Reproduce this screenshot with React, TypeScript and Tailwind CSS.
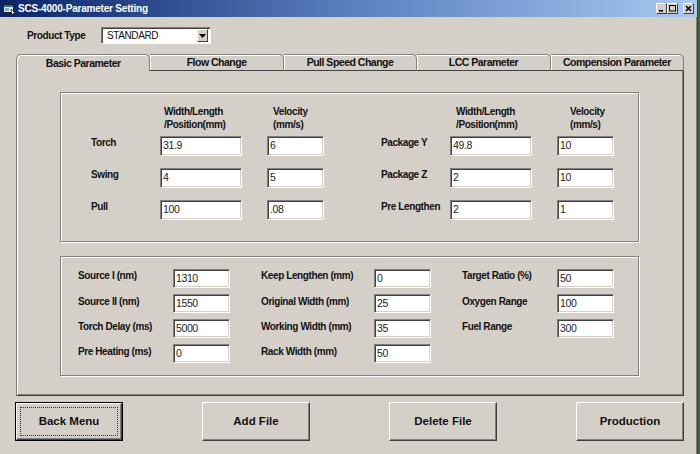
import React from "react";

const sans = "font-['Liberation_Sans',Arial,sans-serif]";

function Field({ value, tall }: { value: string; tall?: boolean }) {
  return (
    <div
      className={`${tall ? "h-[20px]" : "h-[19px]"} bg-white border border-t-[#808080] border-l-[#808080] border-b-white border-r-white shadow-[inset_1px_1px_0_#404040,inset_-1px_-1px_0_#d4d0c8] flex items-center pl-[2px] text-[10.5px] tracking-[-0.4px] text-[#222]`}
    >
      {value}
    </div>
  );
}

function Label({ children }: { children: React.ReactNode }) {
  return <div className="text-[10px] leading-[13px] font-bold tracking-[-0.4px] text-[#111] whitespace-nowrap">{children}</div>;
}

function TitleButton({ kind }: { kind: "min" | "max" | "close" }) {
  return (
    <div className="w-[11px] h-[11px] bg-[#d4d0c8] border border-t-white border-l-white border-b-[#404040] border-r-[#404040] flex items-center justify-center">
      <svg width="9" height="9" viewBox="0 0 9 9">
        {kind === "min" && <rect x="2" y="6" width="4" height="1.6" fill="#000" />}
        {kind === "max" && <rect x="1.5" y="1.5" width="6" height="5.5" fill="none" stroke="#000" strokeWidth="1" />}
        {kind === "close" && <path d="M2 2 L7 7 M7 2 L2 7" stroke="#000" strokeWidth="1.5" />}
      </svg>
    </div>
  );
}

function Tab({ label, active }: { label: string; active?: boolean }) {
  return (
    <div
      className={
        active
          ? "flex-1 h-[17px] border-t border-l border-r border-[#7f7f7f] rounded-t-[5px] shadow-[inset_1px_1px_0_#fff] bg-[#d4d0c8] text-center leading-[16px] text-[10.5px] tracking-[-0.5px] font-bold"
          : "flex-1 h-[17px] border-t border-r border-[#7f7f7f] border-b-[#404040] border-b rounded-tr-[5px] shadow-[inset_1px_1px_0_#fff] bg-[#d4d0c8] text-center leading-[15px] text-[10.5px] tracking-[-0.5px] font-bold"
      }
    >
      {label}
    </div>
  );
}

function WinButton({ label, isDefault }: { label: string; isDefault?: boolean }) {
  if (isDefault) {
    return (
      <div className="w-[108px] h-[39px] border border-black">
        <div className="h-full border border-t-white border-l-white border-b-[#404040] border-r-[#404040] shadow-[inset_-1px_-1px_0_#808080] p-[3px]">
          <div className="h-full border border-dotted border-[#333] flex items-center justify-center text-[11.5px] font-bold">
            {label}
          </div>
        </div>
      </div>
    );
  }
  return (
    <div className="w-[108px] h-[39px] border border-t-white border-l-white border-b-[#404040] border-r-[#404040] shadow-[inset_-1px_-1px_0_#808080] flex items-center justify-center text-[11.5px] font-bold">
      {label}
    </div>
  );
}

const motion = [
  { a: "Torch", av: "31.9", avel: "6", b: "Package Y", bv: "49.8", bvel: "10" },
  { a: "Swing", av: "4", avel: "5", b: "Package Z", bv: "2", bvel: "10" },
  { a: "Pull", av: "100", avel: ".08", b: "Pre Lengthen", bv: "2", bvel: "1" },
];

const misc = [
  ["Source I (nm)", "1310", "Keep Lengthen (mm)", "0", "Target Ratio (%)", "50"],
  ["Source II (nm)", "1550", "Original Width (mm)", "25", "Oxygen Range", "100"],
  ["Torch Delay (ms)", "5000", "Working Width (mm)", "35", "Fuel Range", "300"],
  ["Pre Heating (ms)", "0", "Rack Width (mm)", "50", "", ""],
];

export default function App() {
  return (
    <div className={`w-[700px] h-[454px] bg-[#3a6b35] overflow-hidden text-[#111] ${sans}`}>
      <div className="w-[698px] h-full bg-[#d4d0c8] border-r border-r-[#404040] shadow-[inset_-1px_0_0_#808080] flex flex-col">
        {/* title bar */}
        <div className="h-[17px] shrink-0 bg-gradient-to-r from-[#0a246a] via-[#5a7fbf] to-[#a6caf0] flex items-center pl-[3px] pr-[3px]">
          <svg width="13" height="12" viewBox="0 0 13 12">
            <rect x="0.5" y="1.5" width="10" height="8" fill="#e8e8e8" stroke="#202020" />
            <rect x="1" y="2" width="9" height="2" fill="#2a6fa8" />
            <rect x="2" y="5" width="4" height="3" fill="#7fb0d0" />
            <path d="M8 6 L12 10 L10 10.5 L9 12 Z" fill="#fff" stroke="#000" strokeWidth="0.6" />
          </svg>
          <span className="ml-[2px] text-white font-bold text-[10px] tracking-[-0.2px]">
            SCS-4000-Parameter Setting
          </span>
          <div className="ml-auto flex items-center">
            <TitleButton kind="min" />
            <TitleButton kind="max" />
            <div className="w-[5px]" />
            <TitleButton kind="close" />
          </div>
        </div>

        {/* product type */}
        <div className="mt-[10px] h-[17px] flex items-center">
          <div className="ml-[27px] w-[74px] text-[10px] tracking-[-0.4px] font-bold">Product Type</div>
          <div className="w-[110px] h-[17px] bg-white border border-t-[#808080] border-l-[#808080] border-b-white border-r-white shadow-[inset_1px_1px_0_#404040] flex items-center pl-[5px] pr-[2px] text-[10px] tracking-[-0.4px]">
            <span className="flex-1">STANDARD</span>
            <div className="w-[11px] h-[13px] bg-[#d4d0c8] border border-t-white border-l-white border-b-[#404040] border-r-[#404040] flex items-center justify-center">
              <svg width="7" height="4" viewBox="0 0 7 4">
                <path d="M0 0 H7 L3.5 4 Z" fill="#000" />
              </svg>
            </div>
          </div>
        </div>

        {/* tabs */}
        <div className="mt-[10px] ml-[16px] w-[668px] flex shrink-0">
          <Tab label="Basic Parameter" active />
          <Tab label="Flow Change" />
          <Tab label="Pull Speed Change" />
          <Tab label="LCC Parameter" />
          <Tab label="Compension Parameter" />
        </div>

        {/* panel */}
        <div className="ml-[16px] w-[668px] h-[325px] shrink-0 border-l border-l-[#7f7f7f] border-r border-r-[#404040] border-b border-b-[#404040] shadow-[inset_1px_0_0_#fff,inset_-1px_-1px_0_#808080] flex flex-col">
          <div className="ml-[43px] mt-[21px] w-[579px] h-[150px] border border-[#808080] shadow-[inset_1px_1px_0_#fff,1px_1px_0_#fff] pl-[30px] pt-[12px]">
            <div className="grid grid-cols-[69px_82px_25px_57px_57px_69px_82px_25px_57px] text-[10px] leading-[13px] tracking-[-0.4px] font-bold">
              <div />
              <div className="pl-[4px] whitespace-nowrap">
                Width/Length
                <br />
                /Position(mm)
              </div>
              <div />
              <div className="pl-[6px] whitespace-nowrap">
                Velocity
                <br />
                (mm/s)
              </div>
              <div />
              <div />
              <div className="pl-[6px] whitespace-nowrap">
                Width/Length
                <br />
                /Position(mm)
              </div>
              <div />
              <div className="pl-[13px] whitespace-nowrap">
                Velocity
                <br />
                (mm/s)
              </div>
            </div>
            <div className="mt-[5px] grid grid-cols-[69px_82px_25px_57px_57px_69px_82px_25px_57px] gap-y-[12px]">
              {motion.map((r) => (
                <React.Fragment key={r.a}>
                  <Label>{r.a}</Label>
                  <Field value={r.av} tall />
                  <div />
                  <Field value={r.avel} tall />
                  <div />
                  <Label>{r.b}</Label>
                  <Field value={r.bv} tall />
                  <div />
                  <Field value={r.bvel} tall />
                </React.Fragment>
              ))}
            </div>
          </div>

          <div className="ml-[43px] mt-[14px] w-[579px] h-[120px] border border-[#808080] shadow-[inset_1px_1px_0_#fff,1px_1px_0_#fff] pl-[17px] pt-[12px]">
            <div className="grid grid-cols-[95px_57px_31px_113px_57px_31px_95px_57px] gap-y-[6px]">
              {misc.map((r, i) => (
                <React.Fragment key={i}>
                  <div className={i === 0 ? "" : "pt-[1px]"}>
                    <Label>{r[0]}</Label>
                  </div>
                  <Field value={r[1]} />
                  <div />
                  <div className={i === 0 ? "" : "pt-[1px]"}>
                    <Label>{r[2]}</Label>
                  </div>
                  <Field value={r[3]} />
                  <div />
                  {r[4] ? (
                    <>
                      <div className={i === 0 ? "" : "pt-[1px]"}>
                        <Label>{r[4]}</Label>
                      </div>
                      <Field value={r[5]} />
                    </>
                  ) : (
                    <>
                      <div />
                      <div />
                    </>
                  )}
                </React.Fragment>
              ))}
            </div>
          </div>
        </div>

        {/* buttons */}
        <div className="mt-[6px] ml-[15px] w-[669px] flex justify-between">
          <WinButton label="Back Menu" isDefault />
          <WinButton label="Add File" />
          <WinButton label="Delete File" />
          <WinButton label="Production" />
        </div>
      </div>
    </div>
  );
}
